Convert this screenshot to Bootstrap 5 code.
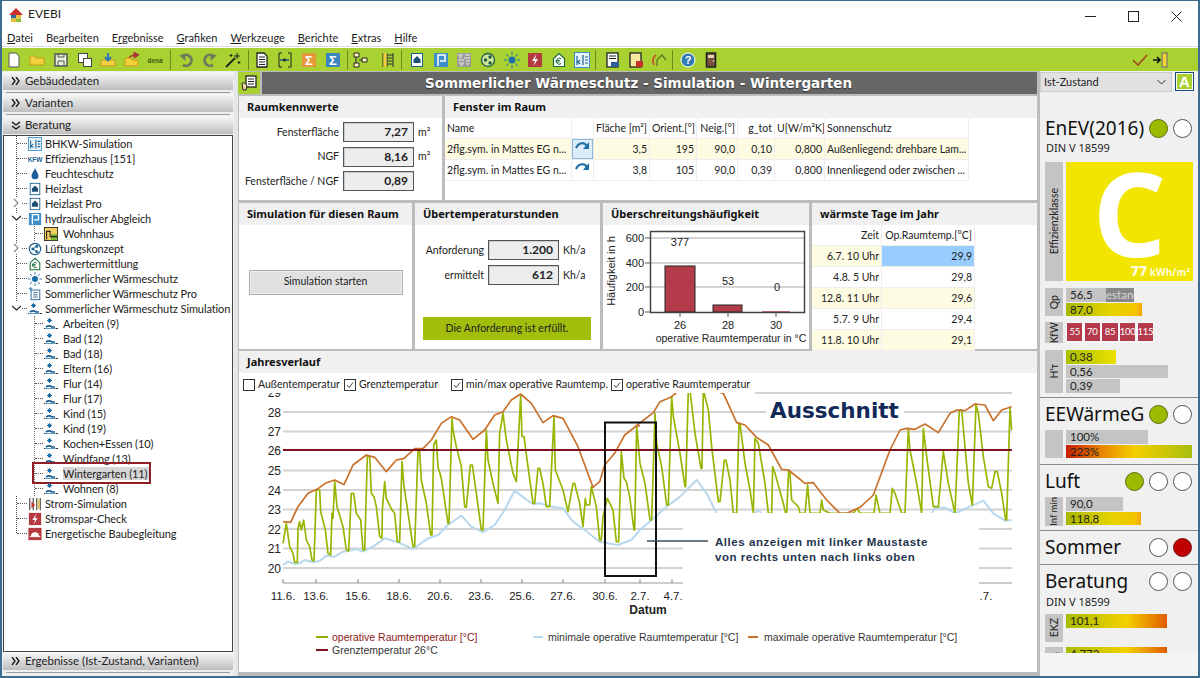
<!DOCTYPE html>
<html lang="de">
<head>
<meta charset="utf-8">
<title>EVEBI</title>
<link href="https://cdn.jsdelivr.net/npm/bootstrap@5.3.0/dist/css/bootstrap.min.css" rel="stylesheet">
<style>
html,body{height:678px;overflow:hidden;margin:0}
body{font-family:Lato,"Liberation Sans",sans-serif;font-size:11px;color:#222;background:#fff;line-height:1.2}
.win{height:678px;width:1200px;border:solid #3e6c8e;border-width:1px 2px 2px;display:flex;flex-direction:column;overflow:hidden}
.titlebar{height:27px;padding-left:6px;font-size:12px;background:#fff;flex:none}
.wctl{width:43px;height:27px;padding:0;border:0;background:none;border-radius:0}
.menubar{height:19px;padding:2px 0 0 5px;background:#fff;gap:13px;justify-content:flex-start;flex-wrap:nowrap;border-bottom:1px solid #ddd;flex:none}
.menubar a{color:#222;text-decoration:none;font-size:11px;padding:0}
.menubar u{text-underline-offset:1px}
.toolbar{height:23px;background:#a9d132;padding-left:0;margin-top:1px;flex:none}
.tb{width:23.6px;height:22px;padding:0;border:0;border-radius:0;display:flex;align-items:center;justify-content:center;flex:none}
.tb svg{width:16px;height:16px}
.tsep{width:1px;height:20px;background:#6f8c1e;flex:none}
.s1{margin:0 3px}.s2{margin:0 1px 0 3px}.s3{margin:0 0 0 3px}.s4{margin:0 4px 0 1px}.s5{margin:0 3px 0 1px}
.tb-check{margin-right:-3px}.tb-exit{margin-right:26px}
.content{flex:1;min-height:0;background:#bcbcbc}
.side{width:232px;background:#efefef;flex:none;display:flex;flex-direction:column;padding-top:1px}
.split{width:4px;flex:none;background:#e6e6e6}
.acc{height:18px;display:flex;align-items:center;gap:4px;padding-left:8px;background:linear-gradient(#f8f8f8,#bebebe);font-size:11.5px;flex:none;margin:0 1px}
.acc-line{height:1px;background:#9b9b9b;margin:2px 4px 1px;flex:none}
.acc-line.last{margin-bottom:3px}
.treebox{flex:1;background:#fff;border:1px solid #444;margin:1px 1px 0;min-height:0}
.tree,.tree ul{list-style:none;padding:0;margin:0}
.tree{margin-left:12px;border-left:1px dotted #555;font-size:11px;letter-spacing:-.1px}
.tree ul{margin-left:17px;border-left:1px dotted #777}
.tree>li:last-child,.noline{position:relative}
.noline{margin-left:-1px;border-left:1px solid #fff}
.noline>ul{margin-left:17px}
.tree>li:last-child::after{content:"";position:absolute;left:-1px;top:8px;height:8px;width:1px;background:#fff}
.node{height:15px;display:flex;align-items:center;padding-left:10px;position:relative;white-space:nowrap}
.node::before{content:"";position:absolute;left:0;top:7px;width:10px;border-top:1px dotted #555}
.node svg.ic{width:16px;height:14px;margin-right:2px;flex:none}
.exp{position:absolute;left:-5px;top:2px;width:9px;height:10px;background:#fff}
.exp svg{display:block}
.sub>.node{padding-left:8px}
.sub>.node::before{width:8px}
.sub>.node svg.ic{margin-right:4px}
.sel span.tx{background:#d6d6d6;padding-right:3px}
.sel::after{content:"";position:absolute;left:-3px;top:-4px;width:119px;height:22px;border:2px solid #8f1f26;pointer-events:none}
.main{flex:1;min-width:0;padding-top:1px;display:flex;flex-direction:column;gap:3px;padding-right:3px}
.titleb{height:22px;display:flex;gap:2px;flex:none}
.tab{width:22px;background:#a9d132;display:flex;align-items:center;justify-content:center}
.titlet{flex:1;background:#666;color:#fff;font-family:"DejaVu Sans",sans-serif;font-weight:700;font-size:13.5px;text-align:center;line-height:22px;padding-right:22px;text-shadow:0 1px 1px #333}
.panelrow{display:flex;gap:3px;flex:none}
.panel{background:#fff;display:flex;flex-direction:column;min-width:0}
.phead{background:#f0f0f0;height:22px;padding:0 8px;display:flex;align-items:center;font-family:"Noto Sans",sans-serif;font-weight:700;font-size:11px;flex:none;color:#111;white-space:nowrap}
.pr1{height:104px;margin-left:1px;margin-top:-1px}
.pr2{height:146px;margin-left:1px}
.pr3{height:321px;margin-left:1px;margin-top:-1px;position:relative}
.w203{width:203px}.w173{width:173px}.w185{width:185px}.w206{width:206px}
.fld{font-size:12px;font-weight:700;background:#ededed;border:1px solid #555;border-radius:0;width:71px;height:20px;min-height:0;padding:0 5px;text-align:right;line-height:18px;box-shadow:inset 1px 1px 0 #ccc;flex:none;color:#222}
.flabel{text-align:right;font-size:10.5px;flex:none;padding-right:4px;white-space:nowrap}
.l100{width:104px}.l69{width:73px}
.frow{display:flex;align-items:center;height:20px}
.unit{padding-left:4px;font-size:10.5px}
.fields1{gap:4.7px;padding-top:4px}
.fields2{gap:5px;padding-top:15px}
table.t{margin:0;table-layout:fixed;border-collapse:separate;border-spacing:0;font-size:10.5px}
table.tf{width:524px}
table.tw{width:163px}
table.t th,table.t td{padding:0 2px;font-weight:400;height:21px;line-height:20px;border:0;border-right:1px solid #eee;border-bottom:1px solid #eee;overflow:hidden;white-space:nowrap;background:#fff;box-shadow:none;color:#222}
table.t .hl td{background:#fdfbe2}
table.t td.num,table.t th.num{text-align:right}
table.t td.blue{background:#99ccff}
.c1{width:127px}.c2{width:22px}.c3{width:56px}.c4{width:47px}.c5{width:41px}.c6{width:37px}.c7{width:50px}.c8{width:144px}.c9{width:70px}.c10{width:93px}
.arrow{display:block;margin:auto;width:17px;height:14px}
table.t td.arrowbox{background:#dcecf8;box-shadow:inset 0 0 0 1px #8ab8da;padding:0}
.simbtn{width:154px;height:25px;background:#e1e1e1;border:1px solid #adadad;border-radius:0;font-size:10.5px;padding:0;color:#222;box-shadow:inset 0 0 0 1px #eee;margin-bottom:10px}
.okbar{background:#a3bd0c;font-size:10.5px;height:23px;width:168px;display:flex;align-items:center;justify-content:center;color:#222;margin:27px 0 0 8px}
.rightp{width:158px;background:#f0f0f0;flex:none;display:flex;flex-direction:column;overflow:hidden}
.selrow{height:24px;flex:none;display:flex;gap:3px;margin-top:1px}
.fakesel{width:132px;height:20px;background:#e1e1e1;border:1px solid #ccc;display:flex;align-items:center;justify-content:space-between;padding:0 5px 0 3px;font-size:11px}
.abtn{width:19px;height:19px;background:#a9d132;color:#fff;font-weight:700;font-size:15px;border:1px solid #1b4a7a;display:flex;align-items:center;justify-content:center;box-shadow:inset 0 0 0 1px #fff;font-family:"Liberation Sans",sans-serif}
.sec{border-bottom:1px solid #8a8a8a;padding:4px 5px 0;flex:none;overflow:hidden}
.sh1{height:302px;padding-top:20px}.sh2{height:67px}.sh3{height:66px}.sh4{height:34px}.sh5{height:88px;border-bottom:0}
.sect{font-family:"Noto Sans",sans-serif;font-size:19px;line-height:24px;color:#111;display:flex;align-items:center;justify-content:space-between;height:24px}
.dots{display:flex;gap:5px;padding-right:1px}
.dot{width:19px;height:19px;border-radius:50%;border:1px solid #555;background:#fff}
.dot.g{background:#9cbb00;border-color:#5d6f10}
.dot.r{background:#c00000;border-color:#7a1010}
.din{line-height:15px;font-family:"Noto Sans",sans-serif;font-size:11px;padding-left:1px}
.din2{margin-top:1px}
.kv{display:flex;gap:3px}
.m4{margin-top:4px}.m5{margin-top:5px}.m6{margin-top:6px}.m7{margin-top:7px}
.vlabel{width:18px;background:#c4c4c4;display:flex;align-items:center;justify-content:center;flex:none;font-size:10.5px}
.vlabel.sm{font-size:9.5px}
.vlabel.h28{height:28px}
.vlabel span{writing-mode:vertical-rl;transform:rotate(180deg);white-space:nowrap}
.bars{display:flex;flex-direction:column;gap:1px;flex:1;min-width:0}
.bar{height:13.5px;font-size:11.5px;line-height:13px;padding-left:4px;background:#c4c4c4;white-space:nowrap;color:#222;flex:none}
.bar.dark{background:#888;color:#d8d8d8;padding:0;overflow:hidden;text-align:center}
.g1{background:linear-gradient(90deg,#a8b800,#e6d400 60%,#f4c400 92%,#f2a400)}
.g2{background:linear-gradient(90deg,#a9c000,#ece000)}
.g3{background:linear-gradient(90deg,#c81e00,#e88a00 30%,#f4d000 55%,#a9bd10)}
.g4{background:linear-gradient(90deg,#a8bd00,#f4d000 60%,#e05c00)}
.effi{height:119px;margin-top:7px;background:#f2e600;color:#fff;flex:1;position:relative;overflow:hidden;display:flex;justify-content:center;font-family:"Open Sans",sans-serif;font-weight:700}
.effi>span{font-size:116px;line-height:100px;height:100px;display:block}
.effi small{position:absolute;right:3px;bottom:3px;font-size:10px;line-height:12px;opacity:.85;font-weight:700}
.effi small b{font-size:14px}
.kfw{display:flex;gap:2.2px;background:#f8f8f8;padding:1px;width:88px}
.kfw span{width:15.5px;height:18px;background:#b43a4c;color:#fff;font-size:9.5px;text-align:center;line-height:18px;letter-spacing:-.3px}
.chk{position:absolute;left:4px;top:25px;width:505px;height:17px;background:#fff;display:flex;align-items:center;font-size:10.5px}
.chk label{display:flex;align-items:center;gap:3px;margin:0;white-space:nowrap;flex:none}
.cw1{width:101px}.cw2{width:107px}.cw3{width:160px}
.chk .form-check-input{width:12px;height:12px;margin:0;border:1px solid #333;border-radius:0;background-color:#fff;flex:none}
.chk .form-check-input:checked{background-color:#fff;border-color:#333;background-image:url("data:image/svg+xml,%3csvg xmlns='http://www.w3.org/2000/svg' viewBox='0 0 12 12'%3e%3cpath fill='none' stroke='%23222' d='M2.5 6l2.5 3 4.5-6'/%3e%3c/svg%3e")}
.foot{flex:1;background:#f4f4f4}
svg text{font-family:"Liberation Sans",sans-serif}
svg text.aus{font-family:"DejaVu Sans",sans-serif}
</style>
</head>
<body>
<svg width="0" height="0" class="position-absolute">
<defs>
<symbol id="i-sim" viewBox="0 0 16 14"><path d="M6.500 1v5M4 3.500h5M4.800 1.800l3.400 3.400M8.200 1.800L4.800 5.200" stroke="#1d6fa8"/><path d="M3 10c2-1.500 4-1.500 6 0h3" stroke="#1d5f8f" stroke-width="1.600" fill="none"/><path d="M1 11.500h1.500M12.500 11.500h2.500" stroke="#333"/><path d="M3 11.500h9" stroke="#5a9cc8"/></symbol>
<symbol id="i-heiz" viewBox="0 0 16 16"><rect x="2.500" y="1.500" width="11" height="13" fill="#fff" stroke="#1d5f8f"/><path d="M8 4l3.500 3.500V11h-7V7.500z" fill="#1d4f77"/></symbol>
<symbol id="i-p" viewBox="0 0 16 16"><rect x="1" y="1" width="14" height="14" fill="#3e8fc8"/><path d="M5 14V3h7v6H7" fill="none" stroke="#fff" stroke-width="1.500"/></symbol>
<symbol id="i-vent" viewBox="0 0 16 16"><circle cx="8" cy="8" r="6.500" fill="none" stroke="#1d5f8f" stroke-width="1.300"/><circle cx="5.500" cy="8" r="1.700" fill="#1d5f8f"/><circle cx="10" cy="5" r="1.700" fill="#1d5f8f"/><circle cx="10" cy="11" r="1.700" fill="#1d5f8f"/><path d="M5.500 8L10 5M5.500 8l4.500 3" stroke="#1d5f8f"/></symbol>
<symbol id="i-euro" viewBox="0 0 16 16"><path d="M2.500 14.500V6.500L8 1.500l5.500 5v8z" fill="#fff" stroke="#1c6b3a" stroke-width="1.200"/><path d="M10.200 7a3 3 0 1 0 0 4.500M4.800 8.500h4M4.800 10h4" fill="none" stroke="#1c6b3a"/></symbol>
<symbol id="i-sun" viewBox="0 0 16 16"><circle cx="8" cy="8" r="3.500" fill="#1d6fa8"/><path d="M8 0v3M8 13v3M0 8h3M13 8h3M2.300 2.300l2.200 2.200M11.500 11.500l2.200 2.200M13.700 2.300l-2.200 2.200M4.500 11.500l-2.200 2.200" stroke="#1d6fa8"/></symbol>
<symbol id="i-bhkw" viewBox="0 0 16 16"><rect x=".5" y=".5" width="15" height="15" fill="#e6f2fa" stroke="#3e8fc8"/><path d="M3 4v9M6 8l-2 2 2 2M9 3v10M11 5h3M11 8h3M11 11h3" stroke="#1d5f8f" stroke-width="1.200" fill="none"/></symbol>
<symbol id="i-strom" viewBox="0 0 16 16"><rect x="1" y="1" width="14" height="14" fill="#b43a3f"/><path d="M9.500 2L5 9h3l-1.500 5L11 7H8z" fill="#fff"/></symbol>
<symbol id="i-arrow" viewBox="0 0 17 14"><path d="M2 9c3-6 8-6 11-2" fill="none" stroke="#1f6fa6" stroke-width="2.200"/><path d="M15 3v7H9z" fill="#1f6fa6"/></symbol>
<symbol id="i-dbl" viewBox="0 0 10 8"><path d="M1 0l3 4-3 4M5 0l3 4-3 4" fill="none" stroke="#111" stroke-width="1.300"/></symbol>
<symbol id="i-cr" viewBox="0 0 9 10"><path d="M2 1l4 4-4 4" fill="none" stroke="#888" stroke-width="1.200"/></symbol>
<symbol id="i-cd" viewBox="0 0 9 10"><path d="M0 3l4.500 4L9 3" fill="none" stroke="#222" stroke-width="1.200"/></symbol>
</defs>
</svg>
<div class="win">
  <div class="titlebar d-flex align-items-center">
    <svg width="16" height="16" viewBox="0 0 16 16" class="me-1"><path d="M1 8L8 1l7 7z" fill="#c8312a"/><rect x="3" y="8" width="5" height="3.500" fill="#2f6aa0"/><rect x="8" y="8" width="5" height="3.500" fill="#e8c23a"/><rect x="3" y="11.500" width="5" height="3.500" fill="#e8c23a"/><rect x="8" y="11.500" width="5" height="3.500" fill="#8fbf2f"/></svg>
    <span>EVEBI</span>
    <div class="ms-auto d-flex">
      <button class="btn wctl" aria-label="Minimieren"><svg width="11" height="11" viewBox="0 0 11 11"><path d="M0 5.500h11" stroke="#222"/></svg></button>
      <button class="btn wctl" aria-label="Maximieren"><svg width="11" height="11" viewBox="0 0 11 11"><rect x=".5" y=".5" width="10" height="10" fill="none" stroke="#222"/></svg></button>
      <button class="btn wctl" aria-label="Schließen"><svg width="11" height="11" viewBox="0 0 11 11"><path d="M.5.500l10 10M10.500.500l-10 10" stroke="#222"/></svg></button>
    </div>
  </div>
  <nav class="navbar menubar">
    <a href="#"><u>D</u>atei</a><a href="#">Be<u>a</u>rbeiten</a><a href="#">E<u>r</u>gebnisse</a><a href="#"><u>G</u>rafiken</a><a href="#"><u>W</u>erkzeuge</a><a href="#"><u>B</u>erichte</a><a href="#"><u>E</u>xtras</a><a href="#"><u>H</u>ilfe</a>
  </nav>
  <div class="toolbar d-flex align-items-center">
    <button class="btn tb"><svg viewBox="0 0 16 16"><path d="M3 1h7l3 3v11H3z" fill="#fff" stroke="#555"/></svg></button>
    <button class="btn tb"><svg viewBox="0 0 16 16"><path d="M1 13V4h5l1 2h8v7z" fill="#f2cf3c" stroke="#c49a1a"/></svg></button>
    <button class="btn tb"><svg viewBox="0 0 16 16"><path d="M2 2h12v12H2z" fill="#e8efd8" stroke="#555" stroke-width="1.500"/><path d="M5 14v-5h6v5M5 2v3h6V2" fill="none" stroke="#555"/></svg></button>
    <button class="btn tb"><svg viewBox="0 0 16 16"><rect x="1.500" y="1.500" width="9" height="9" fill="#fff" stroke="#444"/><rect x="6.500" y="6.500" width="8" height="8" fill="#fff" stroke="#444"/></svg></button>
    <button class="btn tb"><svg viewBox="0 0 16 16"><path d="M1 14V8h14v6z" fill="#f2cf3c" stroke="#c49a1a"/><path d="M8 1v7M5 5l3 3.500L11 5" fill="none" stroke="#2f7ab0" stroke-width="2"/></svg></button>
    <button class="btn tb"><svg viewBox="0 0 16 16"><path d="M1 14V6h6l1 2h6v6z" fill="#f2cf3c" stroke="#c49a1a"/><path d="M5 6c1-3 4-3 6-3M10 0l5 3-5 3z" fill="#a33" stroke="#a33"/></svg></button>
    <button class="btn tb"><svg viewBox="0 0 16 16"><text x="8" y="10.500" font-size="6.500" font-weight="700" text-anchor="middle" fill="#3a5a12">dena</text></svg></button>
    <span class="tsep s1"></span>
    <button class="btn tb"><svg viewBox="0 0 16 16"><path d="M4 4.500a5.500 5.500 0 1 1 1 8.500" fill="none" stroke="#6f7a5a" stroke-width="2.800"/><path d="M1 3h6.500v6z" fill="#6f7a5a"/></svg></button>
    <button class="btn tb"><svg viewBox="0 0 16 16"><path d="M12 4.500a5.500 5.500 0 1 0-1 8.500" fill="none" stroke="#6f7a5a" stroke-width="2.800"/><path d="M15 3H8.500v6z" fill="#6f7a5a"/></svg></button>
    <button class="btn tb"><svg viewBox="0 0 16 16"><path d="M1 15L10 6" stroke="#222" stroke-width="1.800"/><path d="M12 1v6M9 4h6M6 2v3M4.500 3.500h3M14 9v3M12.500 10.500h3" stroke="#222"/></svg></button>
    <span class="tsep s2"></span>
    <button class="btn tb"><svg viewBox="0 0 16 16"><path d="M3 1h7l3 3v11H3z" fill="#fff" stroke="#222" stroke-width="1.300"/><path d="M5 5h6M5 7.500h6M5 10h6M5 12.500h6" stroke="#222"/></svg></button>
    <button class="btn tb"><svg viewBox="0 0 16 16"><path d="M2 1v14M2 1h3M2 15h3M14 1v14M14 1h-3M14 15h-3" stroke="#222" fill="none"/><path d="M3 8h9" stroke="#1d5f8f" stroke-width="1.500"/><circle cx="7.500" cy="8" r="1.500" fill="#222"/></svg></button>
    <button class="btn tb"><svg viewBox="0 0 16 16"><rect x="1" y="1" width="14" height="14" fill="#e8963a"/><text x="8" y="12.500" text-anchor="middle" font-size="13" font-weight="700" fill="#fff">Σ</text></svg></button>
    <button class="btn tb"><svg viewBox="0 0 16 16"><rect x="1" y="1" width="14" height="14" fill="#3a86bd"/><text x="8" y="12.500" text-anchor="middle" font-size="13" font-weight="700" fill="#fff">Σ</text></svg></button>
    <span class="tsep s3"></span>
    <button class="btn tb"><svg viewBox="0 0 16 16"><path d="M2 1h5v4H2zM2 11h5v4H2zM10 6h5v4h-5zM4 5v6M7 8h3" fill="#fff3c0" stroke="#222"/></svg></button>
    <button class="btn tb ms-1"><svg viewBox="0 0 16 16"><path d="M3 1v14M7 1v14M13 1v14M7 3h6M7 6h6M7 9h6M7 12h6" stroke="#333" fill="none"/><rect x="3.500" y="1" width="3" height="14" fill="#f2cf3c"/></svg></button>
    <span class="tsep s4"></span>
    <button class="btn tb"><svg viewBox="0 0 16 16"><use href="#i-heiz"/></svg></button>
    <button class="btn tb"><svg viewBox="0 0 16 16"><use href="#i-p"/></svg></button>
    <button class="btn tb"><svg viewBox="0 0 16 16"><rect x="1" y="1" width="14" height="14" fill="#9a9a9a"/><path d="M2 3h5M9 3h5M3 5h3M8 6h6M2 8h6M10 9h4M3 11h5M10 12h3M4 13h3" stroke="#eee"/></svg></button>
    <button class="btn tb"><svg viewBox="0 0 16 16"><circle cx="8" cy="8" r="6.500" fill="#cfe89a" stroke="#1c5a44" stroke-width="1.300"/><circle cx="5.500" cy="8" r="1.700" fill="#1c5a44"/><circle cx="10" cy="5" r="1.700" fill="#1c5a44"/><circle cx="10" cy="11" r="1.700" fill="#1c5a44"/></svg></button>
    <button class="btn tb"><svg viewBox="0 0 16 16"><use href="#i-sun"/></svg></button>
    <button class="btn tb"><svg viewBox="0 0 16 16"><use href="#i-strom"/></svg></button>
    <button class="btn tb"><svg viewBox="0 0 16 16"><use href="#i-euro"/></svg></button>
    <button class="btn tb"><svg viewBox="0 0 16 16"><use href="#i-bhkw"/></svg></button>
    <span class="tsep s4"></span>
    <button class="btn tb"><svg viewBox="0 0 16 16"><rect x="3" y="1" width="11" height="14" fill="#fff" stroke="#222" stroke-width="1.300"/><path d="M5 4h7M5 6.500h7" stroke="#222"/><rect x="7" y="10" width="8" height="5" fill="#2d5f9a"/></svg></button>
    <button class="btn tb"><svg viewBox="0 0 16 16"><rect x="2" y="1" width="11" height="14" fill="#f8e8a0" stroke="#222" stroke-width="1.300"/><rect x="8" y="9" width="7" height="6" fill="#c8312a"/></svg></button>
    <button class="btn tb"><svg viewBox="0 0 16 16"><path d="M6 14V8l5-5 4 5" fill="none" stroke="#5a7a1e" stroke-width="1.300"/><path d="M5 3C2 5 1 9 3 13" fill="none" stroke="#c8512a" stroke-width="1.800"/></svg></button>
    <span class="tsep s5"></span>
    <button class="btn tb"><svg viewBox="0 0 16 16"><circle cx="8" cy="8" r="7" fill="#2f7ab0" stroke="#fff"/><text x="8" y="12" text-anchor="middle" font-size="11" font-weight="700" fill="#fff">?</text></svg></button>
    <button class="btn tb"><svg viewBox="0 0 16 16"><rect x="3.500" y="1" width="9" height="14" fill="#7a5040" stroke="#222" stroke-width="1.500"/><rect x="5" y="3" width="6" height="3" fill="#e8d8b0"/><circle cx="10.500" cy="9" r=".8" fill="#fff"/></svg></button>
    <button class="btn tb tb-check ms-auto"><svg viewBox="0 0 16 16"><path d="M1 8l5 5L15 3" fill="none" stroke="#a34a1a" stroke-width="1.600"/></svg></button>
    <button class="btn tb tb-exit"><svg viewBox="0 0 16 16"><path d="M1 8h6M5 5l3 3-3 3" fill="none" stroke="#111" stroke-width="1.600"/><rect x="10" y="1" width="5" height="14" fill="#f2cf3c" stroke="#666"/></svg></button>
  </div>
  <div class="content d-flex">
    <aside class="side">
      <div class="acc"><svg width="10" height="8"><use href="#i-dbl"/></svg><span>Gebäudedaten</span></div>
      <div class="acc-line"></div>
      <div class="acc"><svg width="10" height="8"><use href="#i-dbl"/></svg><span>Varianten</span></div>
      <div class="acc-line"></div>
      <div class="acc"><svg width="10" height="9" viewBox="0 0 10 9"><path d="M1 1l4 3 4-3M1 5l4 3 4-3" fill="none" stroke="#111" stroke-width="1.300"/></svg><span>Beratung</span></div>
      <div class="treebox">
        <ul class="tree">
          <li><div class="node"><svg class="ic" viewBox="0 0 16 16"><use href="#i-bhkw"/></svg><span class="tx">BHKW-Simulation</span></div></li>
          <li><div class="node"><svg class="ic" viewBox="0 0 16 14"><text x="8" y="10" text-anchor="middle" font-size="6.500" font-weight="700" fill="#1d5f8f">KFW</text></svg><span class="tx">Effizienzhaus [151]</span></div></li>
          <li><div class="node"><svg class="ic" viewBox="0 0 16 16"><path d="M8 1c1 3 4 6 4 9a4 4 0 1 1-8 0c0-3 3-6 4-9z" fill="#1d5f9a"/></svg><span class="tx">Feuchteschutz</span></div></li>
          <li><div class="node"><svg class="ic" viewBox="0 0 16 16"><use href="#i-heiz"/></svg><span class="tx">Heizlast</span></div></li>
          <li><div class="node"><i class="exp"><svg width="9" height="10"><use href="#i-cr"/></svg></i><svg class="ic" viewBox="0 0 16 16"><use href="#i-heiz"/></svg><span class="tx">Heizlast Pro</span></div></li>
          <li><div class="node"><i class="exp"><svg width="9" height="10"><use href="#i-cd"/></svg></i><svg class="ic" viewBox="0 0 16 16"><use href="#i-p"/></svg><span class="tx">hydraulischer Abgleich</span></div>
            <ul><li class="sub"><div class="node"><svg class="ic" viewBox="0 0 16 16"><rect x=".5" y=".5" width="15" height="15" fill="#f2d060" stroke="#222"/><rect x="8" y="8" width="7" height="7" fill="#7fb53a"/><path d="M3 14V5h4v6h8" fill="none" stroke="#222" stroke-width="1.200"/></svg><span class="tx">Wohnhaus</span></div></li></ul>
          </li>
          <li><div class="node"><i class="exp"><svg width="9" height="10"><use href="#i-cr"/></svg></i><svg class="ic" viewBox="0 0 16 16"><use href="#i-vent"/></svg><span class="tx">Lüftungskonzept</span></div></li>
          <li><div class="node"><svg class="ic" viewBox="0 0 16 16"><use href="#i-euro"/></svg><span class="tx">Sachwertermittlung</span></div></li>
          <li><div class="node"><svg class="ic" viewBox="0 0 16 16"><use href="#i-sun"/></svg><span class="tx">Sommerlicher Wärmeschutz</span></div></li>
          <li><div class="node"><svg class="ic" viewBox="0 0 16 16"><rect x="3.500" y="3.500" width="10" height="11" fill="#fff" stroke="#1d5f8f"/><path d="M6 6.500h5M6 9h5M6 11.500h5" stroke="#1d5f8f"/><path d="M3 0v4M1 2h4" stroke="#1d6fa8"/></svg><span class="tx">Sommerlicher Wärmeschutz Pro</span></div></li>
          <li class="noline"><div class="node"><i class="exp"><svg width="9" height="10"><use href="#i-cd"/></svg></i><svg class="ic" viewBox="0 0 16 14"><use href="#i-sim"/></svg><span class="tx">Sommerlicher Wärmeschutz Simulation</span></div>
            <ul>
              <li class="sub"><div class="node"><svg class="ic" viewBox="0 0 16 14"><use href="#i-sim"/></svg><span class="tx">Arbeiten (9)</span></div></li>
              <li class="sub"><div class="node"><svg class="ic" viewBox="0 0 16 14"><use href="#i-sim"/></svg><span class="tx">Bad (12)</span></div></li>
              <li class="sub"><div class="node"><svg class="ic" viewBox="0 0 16 14"><use href="#i-sim"/></svg><span class="tx">Bad (18)</span></div></li>
              <li class="sub"><div class="node"><svg class="ic" viewBox="0 0 16 14"><use href="#i-sim"/></svg><span class="tx">Eltern (16)</span></div></li>
              <li class="sub"><div class="node"><svg class="ic" viewBox="0 0 16 14"><use href="#i-sim"/></svg><span class="tx">Flur (14)</span></div></li>
              <li class="sub"><div class="node"><svg class="ic" viewBox="0 0 16 14"><use href="#i-sim"/></svg><span class="tx">Flur (17)</span></div></li>
              <li class="sub"><div class="node"><svg class="ic" viewBox="0 0 16 14"><use href="#i-sim"/></svg><span class="tx">Kind (15)</span></div></li>
              <li class="sub"><div class="node"><svg class="ic" viewBox="0 0 16 14"><use href="#i-sim"/></svg><span class="tx">Kind (19)</span></div></li>
              <li class="sub"><div class="node"><svg class="ic" viewBox="0 0 16 14"><use href="#i-sim"/></svg><span class="tx">Kochen+Essen (10)</span></div></li>
              <li class="sub"><div class="node"><svg class="ic" viewBox="0 0 16 14"><use href="#i-sim"/></svg><span class="tx">Windfang (13)</span></div></li>
              <li class="sub"><div class="node sel"><svg class="ic" viewBox="0 0 16 14"><use href="#i-sim"/></svg><span class="tx">Wintergarten (11)</span></div></li>
              <li class="sub"><div class="node"><svg class="ic" viewBox="0 0 16 14"><use href="#i-sim"/></svg><span class="tx">Wohnen (8)</span></div></li>
            </ul>
          </li>
          <li><div class="node"><svg class="ic" viewBox="0 0 16 16"><path d="M2 1v14M6 1v14M10 1v14M14 1v14" stroke="#444" stroke-width="1.300"/><path d="M4 5l4 4-4 4z" fill="#c8312a"/><path d="M12 3v10" stroke="#e8c23a" stroke-width="2"/></svg><span class="tx">Strom-Simulation</span></div></li>
          <li><div class="node"><svg class="ic" viewBox="0 0 16 16"><use href="#i-strom"/></svg><span class="tx">Stromspar-Check</span></div></li>
          <li><div class="node"><svg class="ic" viewBox="0 0 16 16"><rect x=".5" y="1" width="15" height="14" fill="#b43a3f"/><path d="M3 11a5 5 0 0 1 10 0z" fill="#fff"/><path d="M2 11h12" stroke="#fff"/></svg><span class="tx">Energetische Baubegleitung</span></div></li>
        </ul>
      </div>
      <div class="acc"><svg width="10" height="8"><use href="#i-dbl"/></svg><span>Ergebnisse (Ist-Zustand, Varianten)</span></div>
      <div class="acc-line last"></div>
    </aside>
    <div class="split"></div>
    <main class="main">
      <div class="titleb">
        <div class="tab"><svg width="16" height="16" viewBox="0 0 16 16"><rect x="5" y="1" width="10" height="11" fill="#fff" stroke="#222" stroke-width="1.300"/><path d="M7 4h6M7 6.500h6M7 9h6" stroke="#222"/><path d="M1 8c2-1 4 1 5 3l-1 4H2z" fill="#f3d9a0" stroke="#222"/></svg></div>
        <div class="titlet">Sommerlicher Wärmeschutz - Simulation - Wintergarten</div>
      </div>
      <div class="panelrow pr1">
        <section class="panel w203">
          <div class="phead">Raumkennwerte</div>
          <div class="d-flex flex-column fields1">
            <div class="frow"><div class="flabel l100">Fensterfläche</div><div class="fld form-control">7,27</div><div class="unit">m²</div></div>
            <div class="frow"><div class="flabel l100">NGF</div><div class="fld form-control">8,16</div><div class="unit">m²</div></div>
            <div class="frow"><div class="flabel l100">Fensterfläche / NGF</div><div class="fld form-control">0,89</div></div>
          </div>
        </section>
        <section class="panel flex-fill">
          <div class="phead">Fenster im Raum</div>
          <table class="table t tf">
            <colgroup><col class="c1"><col class="c2"><col class="c3"><col class="c4"><col class="c5"><col class="c6"><col class="c7"><col class="c8"></colgroup>
            <thead><tr><th>Name</th><th></th><th class="num">Fläche [m²]</th><th class="num">Orient.[°]</th><th class="num">Neig.[°]</th><th class="num">g_tot</th><th class="num">U[W/m²K]</th><th>Sonnenschutz</th></tr></thead>
            <tbody>
              <tr class="hl"><td>2flg.sym. in Mattes EG n...</td><td class="arrowbox"><svg class="arrow"><use href="#i-arrow"/></svg></td><td class="num">3,5</td><td class="num">195</td><td class="num">90,0</td><td class="num">0,10</td><td class="num">0,800</td><td>Außenliegend: drehbare Lam...</td></tr>
              <tr><td>2flg.sym. in Mattes EG n...</td><td><svg class="arrow"><use href="#i-arrow"/></svg></td><td class="num">3,8</td><td class="num">105</td><td class="num">90,0</td><td class="num">0,39</td><td class="num">0,800</td><td>Innenliegend oder zwischen ...</td></tr>
            </tbody>
          </table>
        </section>
      </div>
      <div class="panelrow pr2">
        <section class="panel w173">
          <div class="phead">Simulation für diesen Raum</div>
          <div class="flex-fill d-flex align-items-center justify-content-center"><button class="btn simbtn">Simulation starten</button></div>
        </section>
        <section class="panel w185">
          <div class="phead">Übertemperaturstunden</div>
          <div class="d-flex flex-column fields2">
            <div class="frow"><div class="flabel l69">Anforderung</div><div class="fld form-control">1.200</div><div class="unit">Kh/a</div></div>
            <div class="frow"><div class="flabel l69">ermittelt</div><div class="fld form-control">612</div><div class="unit">Kh/a</div></div>
            <div class="okbar">Die Anforderung ist erfüllt.</div>
          </div>
        </section>
        <section class="panel w206">
          <div class="phead">Überschreitungshäufigkeit</div>
          <svg width="206" height="124" viewBox="603 225 206 124" class="d-block">
            <path d="M650 238h154M650 263h154M650 287h154" stroke="#c8c8c8" stroke-width="1.500"/>
            <rect x="665" y="266" width="30" height="46" fill="#b43c4a" stroke="#222"/>
            <rect x="713" y="305" width="29" height="7" fill="#b43c4a" stroke="#222"/>
            <path d="M762 312h28" stroke="#b43c4a" stroke-width="1.500"/>
            <rect x="650.500" y="231.500" width="154" height="81" fill="none" stroke="#444" stroke-width="1.500"/>
            <path d="M645 238h5M645 263h5M645 287h5M645 312h5M680 312v5M728 312v5M776 312v5" stroke="#555"/>
            <g font-size="11" fill="#222">
              <text x="644" y="242" text-anchor="end">600</text><text x="644" y="267" text-anchor="end">400</text><text x="644" y="291" text-anchor="end">200</text><text x="644" y="316" text-anchor="end">0</text>
              <text x="680" y="246" text-anchor="middle">377</text><text x="728" y="285" text-anchor="middle">53</text><text x="777" y="291" text-anchor="middle">0</text>
              <text x="680" y="329" text-anchor="middle">26</text><text x="728" y="329" text-anchor="middle">28</text><text x="776" y="329" text-anchor="middle">30</text>
              <text x="731" y="342" text-anchor="middle" font-size="10.500">operative Raumtemperatur in °C</text>
              <text transform="translate(615,271) rotate(-90)" text-anchor="middle">Häufigkeit in h</text>
            </g>
          </svg>
        </section>
        <section class="panel flex-fill">
          <div class="phead">wärmste Tage im Jahr</div>
          <table class="table t tw">
            <colgroup><col class="c9"><col class="c10"></colgroup>
            <thead><tr><th class="num">Zeit</th><th class="num">Op.Raumtemp.[°C]</th></tr></thead>
            <tbody>
              <tr class="hl"><td class="num">6.7. 10 Uhr</td><td class="num blue">29,9</td></tr>
              <tr><td class="num">4.8. 5 Uhr</td><td class="num">29,8</td></tr>
              <tr class="hl"><td class="num">12.8. 11 Uhr</td><td class="num">29,6</td></tr>
              <tr><td class="num">5.7. 9 Uhr</td><td class="num">29,4</td></tr>
              <tr class="hl"><td class="num">11.8. 10 Uhr</td><td class="num">29,1</td></tr>
            </tbody>
          </table>
        </section>
      </div>
      <div class="panelrow pr3">
        <section class="panel flex-fill">
          <div class="phead">Jahresverlauf</div>
          <svg width="797" height="299" viewBox="239 373 797 299" class="d-block">
            <path stroke="#d2d2d2" stroke-width="2" d="M283 412H1012M283 431.500H1012M283 470.500H1012M283 490H1012M283 509.500H1012M283 529H1012M283 548.500H1012M283 568H1012M755 393H1012"/>
            <path d="M283 583H1012" stroke="#bbb" stroke-width="1.500"/>
            <path d="M283 579v4M316 579v4M358 579v4M399 579v4M440 579v4M481 579v4M522 579v4M563 579v4M605 579v4M640 579v4M672 579v4" stroke="#888"/>
            <g fill="none" stroke-linejoin="round">
              <g transform="translate(238,350) scale(.33333)">
                <polyline stroke="#b8d8ee" stroke-width="6" points="135,645 150,635 170,642 185,640 200,630 225,637 245,633 265,617 290,620 315,605 355,598 375,605 405,590 440,565 480,577 525,597 570,565 600,555 630,525 670,497 700,530 735,547 770,525 800,480 830,422 860,445 885,462 905,460 950,472 975,475 1005,515 1040,540 1085,575 1140,585 1180,570 1206,540"/>
                <polyline stroke="#96b400" stroke-width="5" points="135,580 145,520 155,590 165,610 170,637 178,637 180,535 185,515 190,540 197,510 205,570 215,590 222,630 228,633 235,420 245,420 248,485 262,540 270,610 278,615 282,490 285,505 290,395 297,470 315,530 325,600 332,603 340,430 347,430 355,490 368,510 375,600 380,600 388,318 395,320 400,430 408,440 415,470 425,560 432,565 433,480 440,395 445,445 462,480 470,490 478,575 485,575 492,335 497,400 505,455 525,590 530,590 540,300 545,305 550,390 565,460 578,555 582,555 587,285 595,270 600,350 610,385 630,520 633,520 642,205 645,240 655,290 670,350 680,470 685,472 697,345 703,345 715,430 730,540 735,540 745,240 750,330 765,400 780,460 785,250 795,190 805,270 825,370 835,395 848,135 852,260 858,260 870,350 885,460 890,460 900,355 905,355 915,400 925,470 935,470 948,200 952,360 975,420 990,485 1005,400 1010,400 1025,460 1035,530 1042,445 1045,465 1055,465 1060,410 1075,470 1085,570 1090,570 1095,500 1100,480 1108,445 1125,480 1135,575 1142,575 1150,305 1158,385 1165,395 1175,440 1188,540 1190,540 1196,230 1206,340"/>
                <polyline stroke="#c9702a" stroke-width="5" points="135,515 158,517 180,470 210,430 240,416 262,400 290,390 318,404 345,345 385,315 410,322 445,365 475,330 497,326 530,296 555,296 580,270 610,220 640,200 665,210 705,268 740,240 770,195 795,185 820,150 848,132 880,160 915,218 945,197 975,205 1020,290 1065,412 1085,395 1100,345 1130,310 1160,255 1195,228 1206,228"/>
              </g>
              <g transform="translate(640,350) scale(.33333)">
                <polyline stroke="#b8d8ee" stroke-width="6" points="0,540 35,510 80,470 120,440 170,390 200,430 230,490"/>
                <polyline stroke="#b8d8ee" stroke-width="6" points="345,490 355,480 365,490"/>
                <polyline stroke="#b8d8ee" stroke-width="6" points="860,520 875,490 885,473 915,473 945,490 990,470 1030,452 1060,490 1095,512 1115,510"/>
                <polyline stroke="#96b400" stroke-width="5" points="0,340 15,400 30,510 35,510 45,190 50,280 65,350 80,465 85,465 95,140 100,200 120,310 135,410 137,410 145,120 150,120 165,250 183,355 186,355 190,120 205,180 215,290 235,455 240,455 253,330 258,330 270,390 280,490 290,490 297,220 300,220 315,340 330,420 340,490 345,265 355,280 375,400 385,490 395,490 398,350 405,370 412,395 430,460 437,490 440,490 446,360 450,370 455,450 475,470 480,490 495,490 503,405 510,490 520,490 540,490 545,450 550,480 570,490 640,490 652,475 660,490 702,490 708,435 720,490 750,490 757,415 765,430 785,490 795,490 805,235 810,300 830,400 845,490 850,235 860,320 880,470 895,470 910,305 925,400 945,490 958,180 965,180 985,400 997,465 1008,165 1015,190 1030,320 1045,410 1055,415 1065,365 1072,365 1085,430 1097,510 1100,510 1110,175 1115,240"/>
                <polyline stroke="#c9702a" stroke-width="5" points="-12,228 40,188 60,155 95,140 130,110 215,120 250,130 290,218 315,225 350,262 385,285 425,358 445,360 495,400 520,398 560,450 600,490 620,490 660,472 700,435 750,300 780,240 800,235 825,238 855,222 895,248 930,190 950,180 975,182 1005,162 1035,165 1060,212 1085,180 1115,170"/>
              </g>
            </g>
            <rect x="683" y="513" width="296" height="90" fill="#fff"/>
            <rect x="766" y="397" width="138" height="24" fill="#fff"/>
            <path d="M283 450H1012" stroke="#7b1420" stroke-width="1.800"/>
            <rect x="605" y="422.500" width="51" height="153.500" fill="none" stroke="#111" stroke-width="2"/>
            <path d="M647 541h61" stroke="#3d4f60" stroke-width="1.500"/>
            <text class="aus" x="770" y="417.500" font-size="21.500" font-weight="700" fill="#12295a">Ausschnitt</text>
            <g font-size="11.500" font-weight="700" fill="#24344e" letter-spacing=".55"><text x="715" y="546">Alles anzeigen mit linker Maustaste</text><text x="715" y="561">von rechts unten nach links oben</text></g>
            <g font-size="12" fill="#222" text-anchor="end">
              <text x="281" y="397">29</text><text x="281" y="416.500">28</text><text x="281" y="436">27</text><text x="281" y="455">26</text><text x="281" y="475">25</text><text x="281" y="494.500">24</text><text x="281" y="514">23</text><text x="281" y="533.500">22</text><text x="281" y="553">21</text><text x="281" y="572.500">20</text>
            </g>
            <g font-size="11.500" fill="#222" text-anchor="middle">
              <text x="283" y="600">11.6.</text><text x="316" y="600">13.6.</text><text x="358" y="600">15.6.</text><text x="399" y="600">18.6.</text><text x="440" y="600">20.6.</text><text x="481" y="600">23.6.</text><text x="522" y="600">25.6.</text><text x="563" y="600">27.6.</text><text x="605" y="600">30.6.</text><text x="640" y="600">2.7.</text><text x="673" y="600">4.7.</text><text x="986" y="600">.7.</text>
            </g>
            <text x="648" y="614" font-size="12" font-weight="700" text-anchor="middle" fill="#222">Datum</text>
            <path d="M316 637h12" stroke="#8fb000" stroke-width="2"/><path d="M533 637h10" stroke="#b8d8ee" stroke-width="2"/><path d="M748 637h10" stroke="#c9702a" stroke-width="2"/><path d="M316 650h12" stroke="#7b1420" stroke-width="2"/>
            <g font-size="10.500">
              <text x="332" y="641" fill="#8b1a1a">operative Raumtemperatur [°C]</text>
              <text x="548" y="641" fill="#333">minimale operative Raumtemperatur [°C]</text>
              <text x="764" y="641" fill="#333">maximale operative Raumtemperatur [°C]</text>
              <text x="332" y="654" fill="#333">Grenztemperatur 26°C</text>
            </g>
          </svg>
        </section>
        <div class="chk">
          <label class="cw1"><input class="form-check-input" type="checkbox">Außentemperatur</label>
          <label class="cw2"><input class="form-check-input" type="checkbox" checked>Grenztemperatur</label>
          <label class="cw3"><input class="form-check-input" type="checkbox" checked>min/max operative Raumtemp.</label>
          <label><input class="form-check-input" type="checkbox" checked>operative Raumtemperatur</label>
        </div>
      </div>
    </main>
    <aside class="rightp">
      <div class="selrow">
        <div class="fakesel"><span>Ist-Zustand</span><svg width="9" height="6" viewBox="0 0 9 6"><path d="M.5 1l4 4 4-4" fill="none" stroke="#333"/></svg></div>
        <div class="abtn">A</div>
      </div>
      <div class="sec sh1">
        <div class="sect"><span>EnEV(2016)</span><div class="dots"><div class="dot g"></div><div class="dot"></div></div></div>
        <div class="din">DIN V 18599</div>
        <div class="kv"><div class="vlabel m7"><span>Effizienzklasse</span></div><div class="effi"><span>C</span><small><b>77</b> kWh/m²</small></div></div>
        <div class="kv m7"><div class="vlabel"><span>Qp</span></div><div class="bars">
          <div class="d-flex"><div class="bar" style="width:40px">56,5</div><div class="bar dark" style="width:28px">estand</div></div>
          <div class="bar g1" style="width:76px">87,0</div></div></div>
        <div class="kv m6"><div class="vlabel"><span>KfW</span></div><div class="kfw"><span>55</span><span>70</span><span>85</span><span>100</span><span>115</span></div></div>
        <div class="kv m7"><div class="vlabel"><span>H'ᴛ</span></div><div class="bars">
          <div class="bar g2" style="width:50px">0,38</div><div class="bar" style="width:102px">0,56</div><div class="bar" style="width:54px">0,39</div></div></div>
      </div>
      <div class="sec sh2">
        <div class="sect"><span>EEWärmeG</span><div class="dots"><div class="dot g"></div><div class="dot"></div></div></div>
        <div class="kv m4"><div class="vlabel"></div><div class="bars"><div class="bar" style="width:82px">100%</div><div class="bar g3" style="width:126px">223%</div></div></div>
      </div>
      <div class="sec sh3">
        <div class="sect"><span>Luft</span><div class="dots"><div class="dot g"></div><div class="dot"></div><div class="dot"></div></div></div>
        <div class="kv m4"><div class="vlabel sm"><span>Inf min</span></div><div class="bars"><div class="bar" style="width:57px">90,0</div><div class="bar g1" style="width:75px">118,8</div></div></div>
      </div>
      <div class="sec sh4">
        <div class="sect"><span>Sommer</span><div class="dots"><div class="dot"></div><div class="dot r"></div></div></div>
      </div>
      <div class="sec sh5">
        <div class="sect"><span>Beratung</span><div class="dots"><div class="dot"></div><div class="dot"></div></div></div>
        <div class="din din2">DIN V 18599</div>
        <div class="kv m5"><div class="vlabel h28"><span>EKZ</span></div><div class="bars"><div class="bar g4" style="width:101px">101,1</div></div></div>
        <div class="kv m5"><div class="vlabel h28"><span>CO₂</span></div><div class="bars"><div class="bar g4" style="width:101px">4.772</div></div></div>
      </div>
      <div class="foot"></div>
    </aside>
  </div>
</div>
</body>
</html>
